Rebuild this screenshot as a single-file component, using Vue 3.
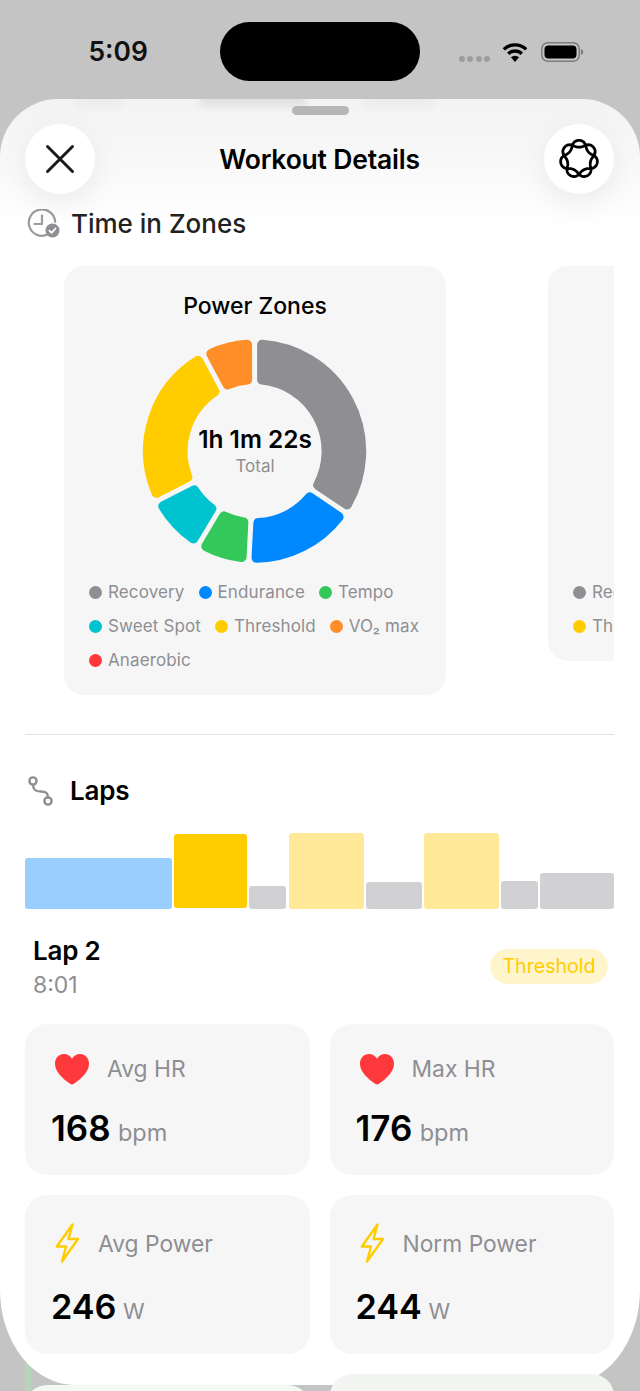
<script setup>
const rad = (d) => (d * Math.PI) / 180
const CX = 114.6, CY = 115.2, R = 111.6, R0 = 67, CORNER = 5, GAP = 5

function pt(theta, rho) {
  return `${(CX + rho * Math.sin(rad(theta))).toFixed(2)} ${(CY - rho * Math.cos(rad(theta))).toFixed(2)}`
}
function sector(t1, t2) {
  const d = GAP / 2 + CORNER
  const Ro = R - CORNER, Ri = R0 + CORNER
  const ao = (Math.asin(d / Ro) * 180) / Math.PI
  const ai = (Math.asin(d / Ri) * 180) / Math.PI
  const large = t2 - t1 - 2 * ao > 180 ? 1 : 0
  return `M${pt(t1 + ao, Ro)} A${Ro} ${Ro} 0 ${large} 1 ${pt(t2 - ao, Ro)} L${pt(t2 - ai, Ri)} A${Ri} ${Ri} 0 ${large} 0 ${pt(t1 + ai, Ri)} Z`
}

const segments = [
  { c: '#8e8e93', a: 0, b: 124 },
  { c: '#0088ff', a: 124, b: 183 },
  { c: '#34c759', a: 183, b: 211 },
  { c: '#00c3d0', a: 211, b: 243 },
  { c: '#ffcc00', a: 243, b: 332 },
  { c: '#ff8d28', a: 332, b: 360 },
].map((s) => ({ color: s.c, d: sector(s.a, s.b) }))

const zoneColors = {
  Recovery: '#8e8e93', Endurance: '#0088ff', Tempo: '#34c759', 'Sweet Spot': '#00c3d0',
  Threshold: '#ffcc00', 'VO₂ max': '#ff8d28', Anaerobic: '#ff383c',
}
const charts = [
  { id: 'power', title: 'Power Zones', total: '1h 1m 22s', zones: ['Recovery', 'Endurance', 'Tempo', 'Sweet Spot', 'Threshold', 'VO₂ max', 'Anaerobic'] },
  { id: 'next', zones: ['Recovery', 'Endurance', 'Tempo', 'Threshold', 'Anaerobic'] },
]

const laps = [
  { w: 146.5, h: 51, c: '#99ceff' },
  { w: 73, h: 74, c: '#ffcc00', active: true },
  { w: 37.5, h: 23, c: '#d1d1d3' },
  { w: 75, h: 76, c: '#ffe999' },
  { w: 56, h: 27, c: '#d1d1d3' },
  { w: 75, h: 76, c: '#ffe999' },
  { w: 37, h: 28, c: '#d1d1d3' },
  { w: 73.5, h: 36, c: '#d1d1d3' },
]

const stats = [
  { label: 'Avg HR', value: '168', unit: 'bpm', kind: 'hr' },
  { label: 'Max HR', value: '176', unit: 'bpm', kind: 'hr' },
  { label: 'Avg Power', value: '246', unit: 'W', kind: 'power' },
  { label: 'Norm Power', value: '244', unit: 'W', kind: 'power' },
]

// seven-lobed woven ring for the header glyph: two strands crossing seven times
const orb = (() => {
  const pts = []
  const a = 15.2, b = 3.4, k = 1.0
  const n = 420
  for (let i = 0; i <= n; i++) {
    const th = (i / n) * Math.PI * 4
    const r = a + (b * Math.tanh(k * Math.cos(3.5 * th))) / Math.tanh(k)
    pts.push(`${(21 + r * Math.sin(th)).toFixed(2)} ${(21 - r * Math.cos(th)).toFixed(2)}`)
  }
  return 'M' + pts.join(' L') + ' Z'
})()
</script>

<template>
  <div class="phone">
    <div class="behind-stripe"></div>

    <div class="status">
      <div class="time">5:09</div>
      <div class="island"></div>
      <div class="indicators">
        <div class="cell"><i></i><i></i><i></i><i></i></div>
        <svg class="wifi" width="26" height="20" viewBox="0 0 26 20">
          <path d="M1.8 7.4A16 16 0 0 1 24.2 7.4" fill="none" stroke="#000" stroke-width="3.4" />
          <path d="M6.2 11.8A9.8 9.8 0 0 1 19.8 11.8" fill="none" stroke="#000" stroke-width="3.4" />
          <path d="M13 20L8.9 15.3A6 6 0 0 1 17.1 15.3Z" fill="#000" />
        </svg>
        <svg class="battery" width="43" height="20" viewBox="0 0 43 20">
          <rect x="0.8" y="0.8" width="37.5" height="18.4" rx="6" fill="none" stroke="#7d7d7d" stroke-width="1.5" />
          <rect x="3.5" y="3.5" width="32" height="13" rx="4" fill="#000" />
          <path d="M40 7v6c1.4-.4 2.2-1.6 2.2-3S41.4 7.4 40 7Z" fill="#7d7d7d" />
        </svg>
      </div>
    </div>

    <div class="sheet">
      <div class="ghost"><i class="g1"></i><i class="g2"></i><i class="g3"></i></div>
      <div class="grabber"></div>

      <header class="nav">
        <button class="round">
          <svg width="32" height="32" viewBox="0 0 32 32">
            <path d="M3.5 3.5L28.5 28.5M28.5 3.5L3.5 28.5" stroke="#1a1a1a" stroke-width="3" stroke-linecap="round" />
          </svg>
        </button>
        <h1 class="nav-title">Workout Details</h1>
        <button class="round">
          <svg width="42" height="42" viewBox="0 0 42 42">
            <path :d="orb" fill="none" stroke="#000" stroke-width="2.8" stroke-linejoin="round" />
          </svg>
        </button>
      </header>

      <div class="section-head zones-head">
        <svg width="34" height="30" viewBox="0 0 34 30">
          <path d="M20.5 25.6A13.2 13.2 0 1 1 28.2 13" fill="none" stroke="#9a9a9c" stroke-width="2.2" stroke-linecap="round" />
          <path d="M15 6.5V15H7.5" fill="none" stroke="#9a9a9c" stroke-width="2.2" stroke-linecap="round" stroke-linejoin="round" />
          <circle cx="25.5" cy="21.5" r="7" fill="#8e8e93" />
          <path d="M22.4 21.6l2.2 2.3 3.9-4.4" fill="none" stroke="#fff" stroke-width="1.8" stroke-linecap="round" stroke-linejoin="round" />
        </svg>
        <h2 class="zones-title">Time in Zones</h2>
      </div>

      <div class="scroller">
        <section v-for="chart in charts" :key="chart.id" class="chart-card">
          <h3 class="chart-title">{{ chart.title }}</h3>
          <div class="donut">
            <template v-if="chart.total">
              <svg width="230" height="230" viewBox="0 0 230 230">
                <path v-for="s in segments" :key="s.color" :d="s.d" :fill="s.color" :stroke="s.color"
                  stroke-width="10" stroke-linejoin="round" />
              </svg>
              <div class="donut-center">
                <div class="donut-total">{{ chart.total }}</div>
                <div class="donut-label">Total</div>
              </div>
            </template>
          </div>
          <ul class="legend">
            <li v-for="z in chart.zones" :key="z" class="legend-item">
              <i class="dot" :style="{ background: zoneColors[z] }"></i>{{ z }}
            </li>
          </ul>
        </section>
      </div>

      <hr class="divider" />

      <div class="section-head laps-head">
        <svg width="32" height="32" viewBox="0 0 32 32">
          <circle cx="7" cy="6" r="3.6" fill="none" stroke="#8e8e93" stroke-width="2.4" />
          <circle cx="22" cy="26" r="3.6" fill="none" stroke="#8e8e93" stroke-width="2.4" />
          <path d="M7 9.6C7 16 11 16.5 15 16.5C20 16.5 22 18 22 22.4" fill="none" stroke="#8e8e93" stroke-width="2.4" stroke-linecap="round" />
        </svg>
        <h2 class="laps-title">Laps</h2>
      </div>

      <div class="bars">
        <div v-for="(l, i) in laps" :key="i" class="bar" :class="{ active: l.active }"
          :style="{ flex: `0 0 ${l.w}px`, height: l.h + 'px', background: l.c }"></div>
      </div>

      <div class="lap-row">
        <div>
          <div class="lap-name">Lap 2</div>
          <div class="lap-time">8:01</div>
        </div>
        <div class="badge">Threshold</div>
      </div>

      <div class="stats">
        <article v-for="s in stats" :key="s.label" class="stat" :class="s.kind">
          <div class="stat-head">
            <svg v-if="s.kind === 'hr'" width="36" height="32" viewBox="0 0 36 32">
              <path d="M18 31.5C16.8 31.5 15.6 30.7 13 28.6C6.5 23.4 1 17.8 1 10.5C1 5 5 1 10 1C13.4 1 16.2 2.7 18 5.7C19.8 2.7 22.6 1 26 1C31 1 35 5 35 10.5C35 17.8 29.5 23.4 23 28.6C20.4 30.7 19.2 31.5 18 31.5Z" fill="#ff383c" />
            </svg>
            <svg v-else width="29" height="42" viewBox="0 0 29 42">
              <path d="M20.5 2.5L4.8 24.5H14L10 39.5L26 17H16.5Z" fill="none" stroke="#ffcc00" stroke-width="2.4" stroke-linejoin="round" />
            </svg>
            <span class="stat-label">{{ s.label }}</span>
          </div>
          <div class="stat-value">{{ s.value }} <small>{{ s.unit }}</small></div>
        </article>
      </div>
    </div>

    <div class="peek">
      <div class="peek-card left"></div>
      <div class="peek-card"></div>
    </div>
  </div>
</template>

<style>
html, body { margin: 0; background: #c4c4c4; }
</style>

<style scoped>
* { box-sizing: border-box; }
.phone {
  position: relative;
  width: 640px;
  height: 1391px;
  overflow: hidden;
  background: #c4c4c4;
  font-family: Inter, "Noto Sans", sans-serif;
  color: #000;
}
.behind-stripe {
  position: absolute;
  left: 25px;
  bottom: 0;
  width: 6px;
  height: 50px;
  background: #b7d3bc;
}

/* status bar */
.status {
  height: 99px;
  display: grid;
  grid-template-columns: 220px 200px 220px;
  align-items: start;
}
.time {
  margin-top: 34px;
  padding-left: 88.5px;
  font-size: 26.4px;
  line-height: 34px;
  font-weight: 600;
  color: #111;
}
.island {
  margin-top: 22px;
  height: 59px;
  border-radius: 30px;
  background: #000;
}
.indicators {
  margin-top: 42px;
  padding-left: 39px;
  display: flex;
  align-items: flex-end;
  height: 20px;
}
.cell { display: flex; gap: 2.4px; margin-right: 12px; margin-bottom: 0.5px; }
.cell i { width: 6px; height: 6px; border-radius: 50%; background: #9d9d9d; }
.wifi { margin-right: 13px; }

/* sheet */
.sheet {
  position: relative;
  padding: 25px 26px 31px 25px;
  background: linear-gradient(#f3f3f3 0, #f8f8f8 60px, #fdfdfd 105px, #fff 125px);
  border-radius: 58px 58px 75px 75px / 58px 58px 95px 95px;
  overflow: hidden;
}
.ghost {
  position: absolute;
  top: -6px;
  left: 0;
  right: 0;
  height: 14px;
  filter: blur(3px);
}
.ghost i { position: absolute; top: 0; height: 14px; border-radius: 3px; }
.ghost .g1 { left: 75px; width: 47px; background: #ececec; }
.ghost .g2 { left: 200px; width: 106px; background: #e2e2e2; }
.ghost .g3 { left: 363px; width: 70px; background: #ececec; }
.grabber {
  position: absolute;
  top: 7px;
  left: 292px;
  width: 57px;
  height: 9px;
  border-radius: 5px;
  background: #b6b6b8;
}
.nav {
  display: flex;
  justify-content: space-between;
  align-items: center;
  height: 70px;
}
.round {
  width: 70px;
  height: 70px;
  padding: 0;
  display: flex;
  align-items: center;
  justify-content: center;
  border: 0;
  border-radius: 50%;
  background: #fff;
  box-shadow: 0 10px 32px rgba(0, 0, 0, 0.07);
}
.nav-title {
  margin: 0;
  font-size: 26.5px;
  line-height: 32px;
  font-weight: 600;
  letter-spacing: -0.2px;
}

.section-head { display: flex; align-items: center; height: 30px; }
.zones-head { margin-top: 15px; margin-left: 2px; gap: 10px; }
.zones-title {
  margin: 0;
  font-size: 26px;
  line-height: 30px;
  font-weight: 500;
  color: #222;
}
.laps-head { margin-top: 41px; margin-left: 1px; gap: 12px; }
.laps-title {
  margin: 0;
  font-size: 26px;
  line-height: 30px;
  font-weight: 600;
  letter-spacing: -0.2px;
}

.scroller {
  margin-top: 27px;
  padding-left: 39px;
  display: flex;
  align-items: flex-start;
  gap: 102px;
  overflow: hidden;
}
.chart-card {
  flex: 0 0 382px;
  padding: 24px 25px 23px;
  border-radius: 20px;
  background: #f6f6f6;
}
.chart-title {
  margin: 0;
  min-height: 32px;
  text-align: center;
  font-size: 23px;
  line-height: 32px;
  font-weight: 500;
  white-space: nowrap;
}
.donut {
  position: relative;
  margin: 14px auto 0;
  width: 230px;
  height: 230px;
}
.donut svg { display: block; }
.donut-center {
  position: absolute;
  inset: 0;
  display: flex;
  flex-direction: column;
  align-items: center;
  justify-content: center;
}
.donut-total { font-size: 24.4px; line-height: 30px; font-weight: 600; }
.donut-label { font-size: 17px; line-height: 24px; color: #8e8e93; }
.legend {
  margin: 14px -3px 0 0;
  padding: 0;
  list-style: none;
  display: flex;
  flex-wrap: wrap;
  gap: 10px 14px;
}
.legend-item {
  display: flex;
  align-items: center;
  gap: 6px;
  font-size: 17px;
  line-height: 24px;
  letter-spacing: 0.12px;
  color: #8e8e93;
  white-space: nowrap;
}
.dot { width: 13px; height: 13px; border-radius: 50%; }

.divider {
  margin: 39px 0 0;
  border: 0;
  height: 1px;
  background: #e2e2e4;
}

.bars {
  margin-top: 27px;
  height: 76px;
  display: flex;
  align-items: flex-end;
  gap: 2.2px;
}
.bar { border-radius: 3px; }
.bar.active { margin-bottom: 1px; }

.lap-row {
  margin-top: 26px;
  padding: 0 6px 0 8px;
  display: flex;
  justify-content: space-between;
  align-items: center;
}
.lap-name { font-size: 26px; line-height: 32px; font-weight: 600; letter-spacing: -0.2px; }
.lap-time { margin-top: 2px; font-size: 23px; line-height: 33px; color: #8e8e93; }
.badge {
  width: 118px;
  height: 35px;
  margin-bottom: 4px;
  border-radius: 18px;
  background: #fff5cc;
  color: #ffcc00;
  font-size: 19.6px;
  line-height: 35px;
  text-align: center;
}

.stats {
  margin-top: 22px;
  display: grid;
  grid-template-columns: 1fr 1fr;
  grid-template-rows: 151px 159px;
  gap: 20px;
}
.stat {
  padding: 29px 20px 0 26px;
  border-radius: 22px;
  background: #f6f6f6;
}
.stat-head { display: flex; align-items: center; margin-left: 3px; }
.hr .stat-head { gap: 17px; height: 32px; }
.power .stat-head { gap: 17px; height: 38px; margin-left: 1px; }
.stat-label { font-size: 22.8px; line-height: 32px; color: #8e8e93; white-space: nowrap; }
.power .stat-label { padding-top: 2px; }
.stat-value {
  font-size: 35px;
  line-height: 44px;
  font-weight: 600;
  white-space: nowrap;
  word-spacing: -1.5px;
}
.hr .stat-value { margin-top: 21px; }
.power .stat-value { margin-top: 23px; font-size: 34.2px; word-spacing: -2px; }
.stat-value small {
  font-size: 23.5px;
  font-weight: 400;
  color: #8e8e93;
}
.power .stat-value small { font-size: 22px; }

.peek {
  position: relative;
  margin-top: -11px;
  padding: 0 26px 0 25px;
  display: flex;
  gap: 20px;
  align-items: flex-start;
}
.peek-card {
  flex: 1;
  height: 60px;
  border-radius: 22px;
  background: #f3f5f3;
}
.peek-card.left { margin-top: 11px; background: #f2f8f3; }
</style>
